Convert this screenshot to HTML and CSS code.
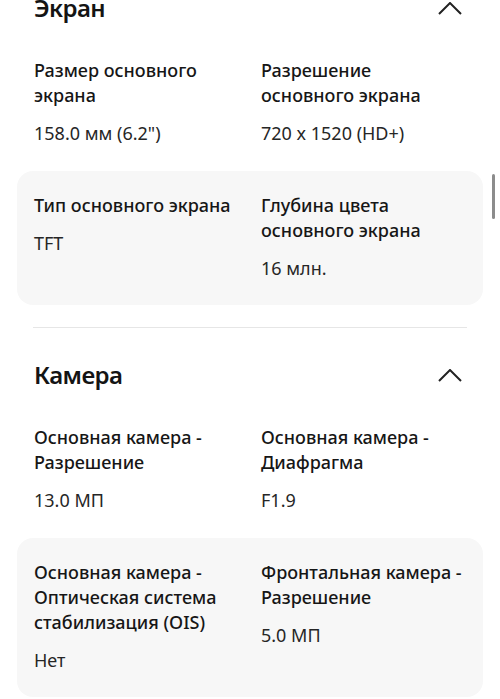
FILE: index.html
```html
<!DOCTYPE html>
<html lang="ru">
<head>
<meta charset="utf-8">
<title>Характеристики</title>
<link rel="stylesheet" href="styles.css">
</head>
<body>
<div class="screen">
  <div class="page">
    <section class="spec">
      <header class="spec-head">
        <h2 class="spec-title">Экран</h2>
        <svg class="chevron" width="24" height="13" viewBox="0 0 24 13"><path d="M1 12 L12 1 L23 12" /></svg>
      </header>
      <div class="spec-row">
        <div class="spec-item">
          <div class="label">Размер основного экрана</div>
          <div class="value">158.0 мм (6.2")</div>
        </div>
        <div class="spec-item">
          <div class="label">Разрешение основного экрана</div>
          <div class="value">720 x 1520 (HD+)</div>
        </div>
      </div>
      <div class="spec-row shaded">
        <div class="spec-item">
          <div class="label">Тип основного экрана</div>
          <div class="value">TFT</div>
        </div>
        <div class="spec-item">
          <div class="label">Глубина цвета основного экрана</div>
          <div class="value">16 млн.</div>
        </div>
      </div>
    </section>
    <hr class="divider">
    <section class="spec">
      <header class="spec-head">
        <h2 class="spec-title">Камера</h2>
        <svg class="chevron" width="24" height="13" viewBox="0 0 24 13"><path d="M1 12 L12 1 L23 12" /></svg>
      </header>
      <div class="spec-row">
        <div class="spec-item">
          <div class="label">Основная камера - Разрешение</div>
          <div class="value">13.0 МП</div>
        </div>
        <div class="spec-item">
          <div class="label">Основная камера - Диафрагма</div>
          <div class="value">F1.9</div>
        </div>
      </div>
      <div class="spec-row shaded">
        <div class="spec-item">
          <div class="label">Основная камера - Оптическая система стабилизация (OIS)</div>
          <div class="value">Нет</div>
        </div>
        <div class="spec-item">
          <div class="label">Фронтальная камера - Разрешение</div>
          <div class="value">5.0 МП</div>
        </div>
      </div>
    </section>
  </div>
  <div class="scrollbar"></div>
</div>
</body>
</html>
```
FILE: styles.css
```css
* { box-sizing: border-box; }
html, body { margin: 0; padding: 0; background: #ffffff; }
body {
  font-family: "Noto Sans", "Liberation Sans", sans-serif;
  color: #1b1b1b;
}
.screen {
  position: relative;
  width: 500px;
  height: 699px;
  overflow: hidden;
}
.page {
  margin-top: -39px;
  padding: 0 17px;
}
.spec-head {
  display: flex;
  align-items: center;
  justify-content: space-between;
  padding: 31px 17px 12px;
}
.spec-title {
  margin: 0;
  font-size: 24px;
  line-height: 32px;
  font-weight: 600;
  letter-spacing: -0.6px;
  color: #141414;
}
.chevron {
  margin-right: 4px;
  display: block;
}
.chevron path {
  fill: none;
  stroke: #222222;
  stroke-width: 2;
}
.spec-row {
  display: grid;
  grid-template-columns: 205px 205px;
  column-gap: 22px;
  padding: 22px 17px 24.5px;
  border-radius: 16px;
}
.spec-row.shaded {
  background: #f7f7f7;
}
.label {
  font-size: 18px;
  line-height: 25px;
  font-weight: 500;
  color: #161616;
  margin-bottom: 13px;
}
.value {
  font-size: 18px;
  line-height: 25px;
  font-weight: 400;
  color: #262626;
}
.divider {
  margin: 22px 16px 0;
  border: 0;
  height: 1px;
  background: #e6e6e6;
}
.scrollbar {
  position: absolute;
  right: 5px;
  top: 174px;
  width: 3px;
  height: 45px;
  border-radius: 2px;
  background: #8c8c8c;
}
```
